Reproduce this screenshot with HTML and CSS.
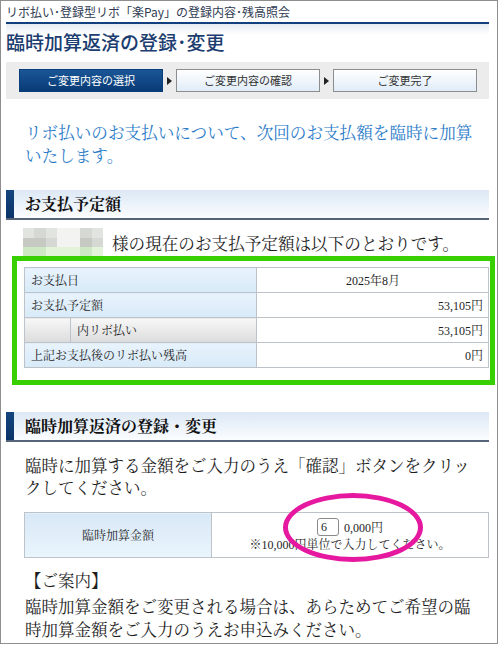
FILE: index.html
```html
<!DOCTYPE html>
<html lang="ja">
<head>
    <meta charset="UTF-8">
    <title>臨時加算返済の登録・変更</title>
    <link rel="stylesheet" href="styles.css">
</head>
<body>
    <div class="page">
        <div class="site_title">リボ払い･登録型リボ「楽Pay」の登録内容･残高照会</div>
        <h1 class="titulo">臨時加算返済の登録･変更</h1>

        <!-- passos -->
        <div class="steps">
            <div class="step active">ご変更内容の選択</div>
            <div class="arrow"><span></span></div>
            <div class="step">ご変更内容の確認</div>
            <div class="arrow"><span></span></div>
            <div class="step">ご変更完了</div>
        </div>

        <p class="lead">リボ払いのお支払いについて、次回のお支払額を臨時に加算いたします。</p>

        <h2 class="sec_head">お支払予定額</h2>
        <div class="greeting">
            <div class="mosaic">
                <span class="a"></span><span class="b"></span><span class="a"></span><span class="w"></span><span class="w"></span><span class="b"></span><span class="a"></span>
                <span class="c"></span><span class="c"></span><span class="b"></span><span class="w"></span><span class="w"></span><span class="c"></span><span class="b"></span>
                <span class="g"></span><span class="g"></span><span class="h"></span><span class="h"></span><span class="h"></span><span class="g"></span><span class="h"></span>
            </div>
            <span>様の現在のお支払予定額は以下のとおりです。</span>
        </div>

        <table class="info">
            <colgroup>
                <col class="c_blank">
                <col class="c_label">
                <col class="c_value">
            </colgroup>
            <tr>
                <th colspan="2">お支払日</th>
                <td class="center">2025年8月</td>
            </tr>
            <tr>
                <th colspan="2">お支払予定額</th>
                <td>53,105円</td>
            </tr>
            <tr>
                <th class="sub"></th>
                <th class="sub">内リボ払い</th>
                <td>53,105円</td>
            </tr>
            <tr>
                <th colspan="2">上記お支払後のリボ払い残高</th>
                <td>0円</td>
            </tr>
        </table>

        <h2 class="sec_head sec_two">臨時加算返済の登録・変更</h2>
        <p class="texto">臨時に加算する金額をご入力のうえ「確認」ボタンをクリックしてください。</p>

        <table class="entry">
            <tr>
                <th>臨時加算金額</th>
                <td>
                    <div class="amount"><span class="box">6</span><span>0,000円</span></div>
                    <div class="note">※10,000円単位で入力してください。</div>
                </td>
            </tr>
        </table>

        <div class="guide">
            <p class="guide_title">【ご案内】</p>
            <p>臨時加算金額をご変更される場合は、あらためてご希望の臨時加算金額をご入力のうえお申込みください。</p>
        </div>

        <!-- marcações -->
        <div class="mark_green"></div>
        <div class="mark_circle"></div>
    </div>
</body>
</html>
```

FILE: styles.css
```css
body {
    margin: 0;
    background-color: #fff;
}
.page {
    position: relative;
    width: 498px;
    height: 644px;
    box-sizing: border-box;
    border: 1px solid #8e8e8e;
    padding: 0 8px 0 5px;
    overflow: hidden;
    font-family: "Liberation Serif", "Noto Serif CJK JP", "Noto Sans CJK JP", serif;
    color: #1e1e1e;
}
p, h1, h2 {
    margin: 0;
}
.site_title {
    font-family: "Noto Sans CJK JP", sans-serif;
    font-size: 12px;
    line-height: 16px;
    padding: 3px 0 2px 0;
    color: #2f3b52;
    border-bottom: 2px solid #123f7e;
}
.titulo {
    font-family: "Noto Sans CJK JP", sans-serif;
    font-weight: 500;
    font-size: 19px;
    line-height: 26px;
    padding-top: 5px;
    color: #1b3d70;
    background: linear-gradient(to bottom, #e6ecf3 0, #ffffff 11px);
}
.steps {
    display: flex;
    align-items: center;
    margin-top: 7px;
    padding: 7px 12px 7px 13px;
    background-color: #ececec;
}
.step {
    width: 144px;
    height: 23px;
    box-sizing: border-box;
    border: 1px solid #8d8d8d;
    background: linear-gradient(to bottom, #ffffff, #e0ecf8);
    font-family: "Noto Sans CJK JP", sans-serif;
    font-size: 11px;
    line-height: 21px;
    text-align: center;
    color: #333;
}
.step.active {
    border-color: #0b3f7b;
    background: linear-gradient(to bottom, #1a5696, #083b76);
    color: #fff;
}
.arrow {
    width: 13px;
    display: flex;
    justify-content: center;
}
.arrow span {
    width: 0;
    height: 0;
    border-left: 5px solid #222;
    border-top: 4px solid transparent;
    border-bottom: 4px solid transparent;
}
.lead {
    margin-top: 23px;
    padding: 0 14px 0 19px;
    font-size: 16.6px;
    line-height: 23px;
    color: #2b7bc8;
}
.sec_head {
    margin-top: 22px;
    height: 28px;
    padding-left: 19px;
    border-bottom: 2px solid #56647a;
    background:
        linear-gradient(to bottom, #15457f, #0a3468) left top / 8px 100% no-repeat,
        linear-gradient(to bottom, #dce8f5, #fbfdff);
    font-size: 16px;
    font-weight: bold;
    line-height: 29px;
    color: #111;
}
.greeting {
    display: flex;
    align-items: center;
    gap: 9px;
    margin-top: 8px;
    padding-left: 17px;
    font-size: 16.6px;
    line-height: 23px;
}
.greeting span {
    padding-top: 4px;
}
.mosaic {
    display: grid;
    grid-template-columns: repeat(7, 1fr);
    width: 80px;
    height: 29px;
}
.mosaic span {
    padding: 0;
}
.mosaic .a { background-color: #e2e4e0; }
.mosaic .b { background-color: #d6d9d3; }
.mosaic .c { background-color: #c6cac2; }
.mosaic .w { background-color: #f3f4f1; }
.mosaic .g { background-color: #cfe8c4; }
.mosaic .h { background-color: #e2f3da; }

table {
    border-collapse: collapse;
    margin-left: 18px;
    width: 465px;
    font-size: 12px;
}
.info {
    margin-top: 10px;
}
.c_blank { width: 46px; }
.c_label { width: 186px; }
.info th, .info td {
    height: 24px;
    padding: 0 6px;
    border: 1px solid #bdc3c9;
    font-weight: normal;
    text-align: left;
}
.info th {
    background: linear-gradient(to bottom, #e8f3fc, #d8eaf8);
}
.info th.sub {
    background: linear-gradient(to bottom, #f7f7f7, #dcdcdc);
}
.info td {
    text-align: right;
    padding-right: 5px;
}
.info td.center {
    text-align: center;
}
.sec_two {
    margin-top: 44px;
}
.texto {
    margin-top: 14px;
    padding: 0 14px 0 19px;
    font-size: 16.5px;
    line-height: 22px;
}
.entry {
    margin-top: 12px;
}
.entry th, .entry td {
    border: 1px solid #bdc3c9;
    font-weight: normal;
    text-align: center;
}
.entry th {
    width: 184px;
    background: linear-gradient(to bottom, #d8e8f6, #eaf5fd);
}
.entry td {
    padding: 4px 0 3px 0;
}
.amount {
    display: flex;
    justify-content: center;
    align-items: center;
    gap: 5px;
    height: 20px;
}
.box {
    width: 22px;
    height: 18px;
    box-sizing: border-box;
    border: 1px solid #8a8a8a;
    border-radius: 3px;
    padding-left: 3px;
    text-align: left;
    line-height: 16px;
}
.note {
    line-height: 17px;
}
.guide {
    margin-top: 12px;
    padding: 0 14px 0 19px;
    font-size: 16.5px;
    line-height: 23px;
}
.guide_title {
    margin-bottom: 3px;
}

/* marcações sobre a tela */
.mark_green {
    position: absolute;
    left: 11px;
    top: 255px;
    width: 483px;
    height: 129px;
    box-sizing: border-box;
    border: 5px solid #38d000;
}
.mark_circle {
    position: absolute;
    left: 282px;
    top: 492px;
    width: 140px;
    height: 69px;
    box-sizing: border-box;
    border: 5px solid #e5189f;
    border-radius: 50%;
}
```
